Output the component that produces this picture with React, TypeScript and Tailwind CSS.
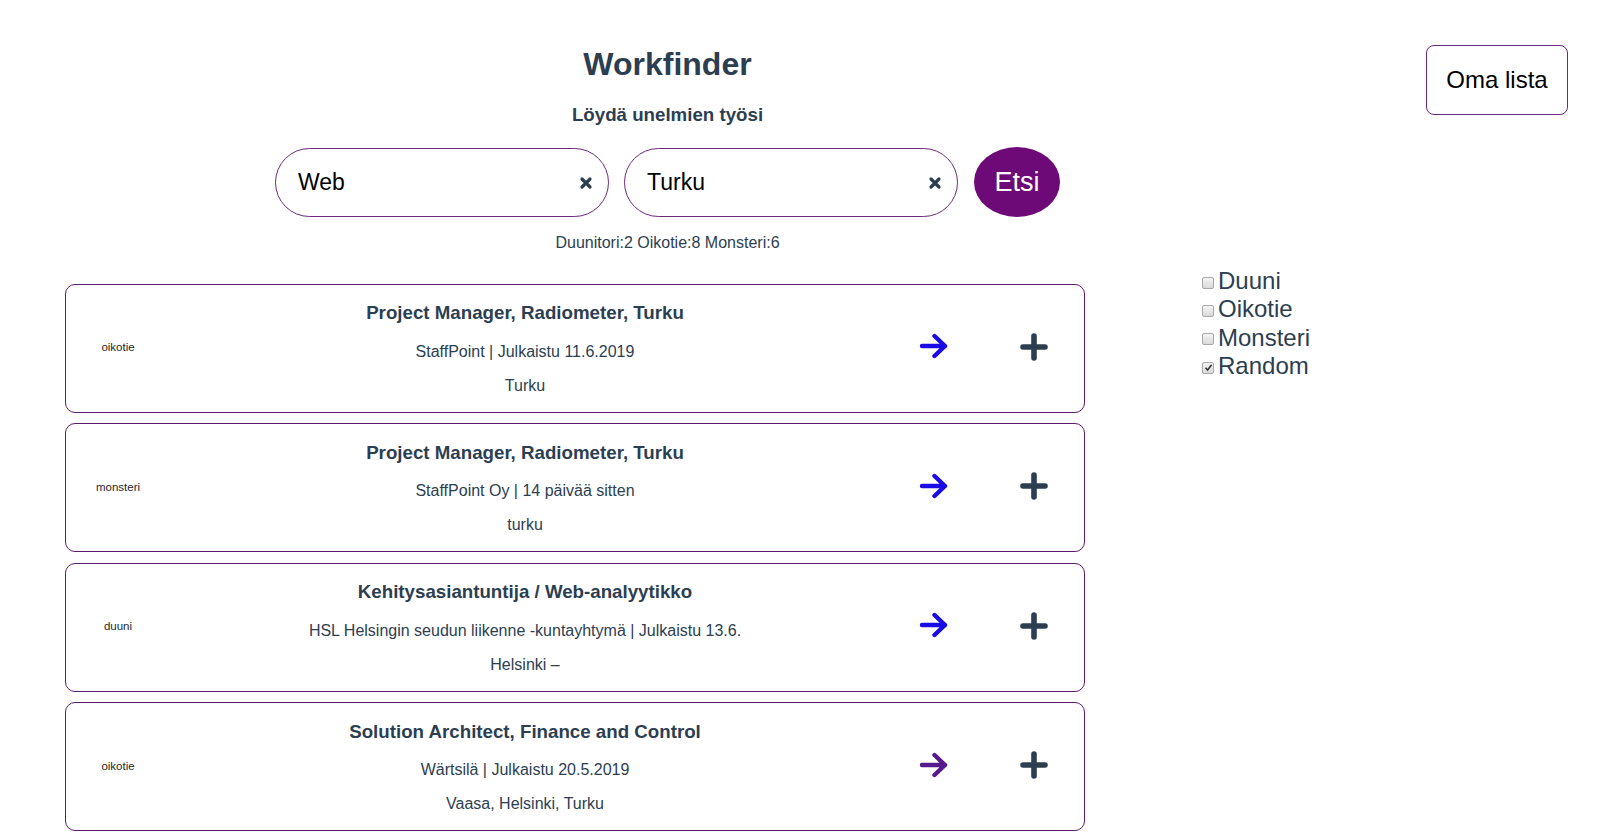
import { useState } from 'react'

interface Job {
  source: string
  title: string
  meta: string
  location: string
  visited?: boolean
}

const JOBS: Job[] = [
  {
    source: 'oikotie',
    title: 'Project Manager, Radiometer, Turku',
    meta: 'StaffPoint | Julkaistu 11.6.2019',
    location: 'Turku'
  },
  {
    source: 'monsteri',
    title: 'Project Manager, Radiometer, Turku',
    meta: 'StaffPoint Oy | 14 päivää sitten',
    location: 'turku'
  },
  {
    source: 'duuni',
    title: 'Kehitysasiantuntija / Web-analyytikko',
    meta: 'HSL Helsingin seudun liikenne -kuntayhtymä | Julkaistu 13.6.',
    location: 'Helsinki –'
  },
  {
    source: 'oikotie',
    title: 'Solution Architect, Finance and Control',
    meta: 'Wärtsilä | Julkaistu 20.5.2019',
    location: 'Vaasa, Helsinki, Turku',
    visited: true
  }
]

const FILTERS = ['Duuni', 'Oikotie', 'Monsteri', 'Random']

function ClearIcon() {
  return (
    <svg width="14" height="14" viewBox="0 0 14 14" className="shrink-0">
      <path d="M3 3 L11 11 M11 3 L3 11" stroke="#2c3e50" strokeWidth="3.2" strokeLinecap="round" />
    </svg>
  )
}

function ArrowIcon({ color }: { color: string }) {
  return (
    <svg width="30" height="26" viewBox="0 0 30 26">
      <path
        d="M3 13 H26 M15.5 3 L26 13 L15.5 23"
        fill="none"
        stroke={color}
        strokeWidth="4.4"
        strokeLinecap="round"
        strokeLinejoin="round"
      />
    </svg>
  )
}

function PlusIcon() {
  return (
    <svg width="28" height="28" viewBox="0 0 28 28">
      <path d="M14 3 V25 M3 14 H25" stroke="#2c3e50" strokeWidth="5.6" strokeLinecap="round" />
    </svg>
  )
}

function SearchField({ value }: { value: string }) {
  return (
    <div className="w-[334px] h-[69px] rounded-full border border-[#6b2a7a] flex items-center pl-[22px] pr-[15px] bg-white">
      <span className="flex-1 text-[23px] text-black">{value}</span>
      <ClearIcon />
    </div>
  )
}

function JobCard({ job }: { job: Job }) {
  return (
    <div className="grid grid-cols-[100px_1fr_100px_100px] items-center border border-[#5e1a6e] rounded-[10px] bg-white">
      <div className="pl-[4px] text-center text-[11.5px] text-[#1f1f1f]">{job.source}</div>
      <div className="flex flex-col items-center text-center pt-[17.5px] pb-[17px] text-[#2c3e50]">
        <div className="text-[18.72px] leading-[21px] font-bold">{job.title}</div>
        <div className="mt-[19.5px] text-[16px] leading-[18px]">{job.meta}</div>
        <div className="mt-[16px] text-[16px] leading-[18px]">{job.location}</div>
      </div>
      <div className="flex justify-center pb-[4px]">
        <ArrowIcon color={job.visited ? '#551a8b' : '#1a0ae6'} />
      </div>
      <div className="flex justify-center pb-[3px]">
        <PlusIcon />
      </div>
    </div>
  )
}

function FakeCheckbox({ checked }: { checked: boolean }) {
  return (
    <span className="w-[12px] h-[12px] rounded-[2px] border border-[#a9a9a9] bg-gradient-to-b from-[#f4f4f4] to-[#d9d9d9] flex items-center justify-center shrink-0 mt-[3px]">
      {checked && (
        <svg width="9" height="9" viewBox="0 0 9 9">
          <path d="M1.5 4.8 L3.6 7 L7.6 1.8" fill="none" stroke="#333" strokeWidth="1.6" />
        </svg>
      )}
    </span>
  )
}

export default function App() {
  const [checked] = useState<Record<string, boolean>>({ Random: true })

  return (
    <div className="min-h-[836px] w-[1605px] bg-white font-['Liberation_Sans',Arial,sans-serif] text-[#2c3e50]">
      {/* yläosa */}
      <div className="flex">
        <div className="w-[1335px] flex flex-col items-center pt-[45.5px]">
          <h1 className="text-[32px] leading-[37px] font-bold">Workfinder</h1>
          <h3 className="mt-[21px] text-[18.72px] leading-[21.5px] font-bold">Löydä unelmien työsi</h3>
          <div className="mt-[22px] flex items-end gap-[15px]">
            <SearchField value="Web" />
            <SearchField value="Turku" />
            <button
              type="button"
              className="ml-[1px] w-[86px] h-[70px] rounded-[50%] bg-[#6e0a78] text-white text-[27px] leading-none"
            >
              Etsi
            </button>
          </div>
          <p className="mt-[16.5px] text-[16px] leading-[18px]">Duunitori:2 Oikotie:8 Monsteri:6</p>
        </div>
        <div className="pt-[45px] pl-[91px]">
          <button
            type="button"
            className="w-[142px] h-[70px] rounded-[8px] border border-[#6b2a7a] bg-white text-black text-[24px]"
          >
            Oma lista
          </button>
        </div>
      </div>

      {/* lista + suodattimet */}
      <div className="mt-[15px] flex items-start">
        <div className="ml-[65px] w-[1020px] mt-[17px] flex flex-col gap-[10.5px]">
          {JOBS.map((job, i) => (
            <JobCard key={i} job={job} />
          ))}
        </div>
        <div className="ml-[117px] mt-[0.5px] flex flex-col">
          {FILTERS.map(f => (
            <label key={f} className="flex items-center gap-[4px] text-[24px] leading-[28.3px] text-[#2c3e50]">
              <FakeCheckbox checked={!!checked[f]} />
              {f}
            </label>
          ))}
        </div>
      </div>
    </div>
  )
}
